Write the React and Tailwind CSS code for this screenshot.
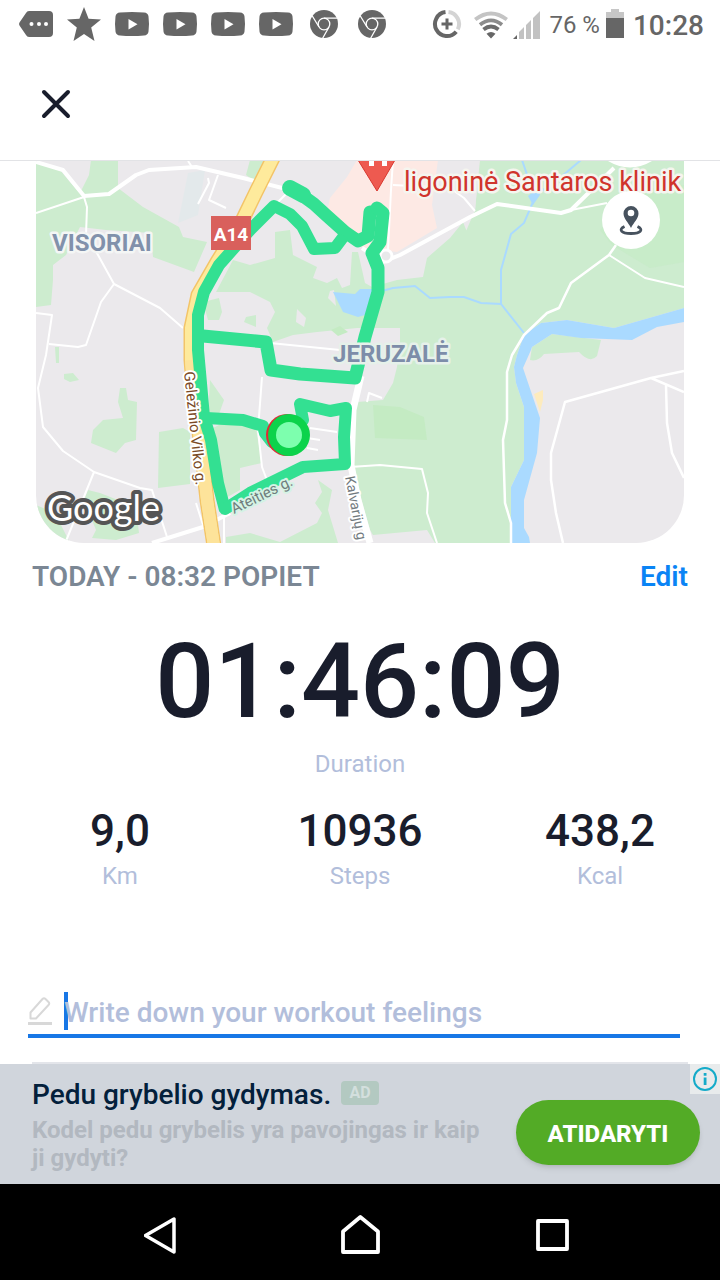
import React from "react";

function MessageIcon() {
  return (
    <svg viewBox="0 0 48 48" className="w-12 h-12">
      <path d="M17 11h20q4 0 4 4v18q0 4-4 4H17q-2 0-3-2L7.500 25.500q-1-1.500 0-3L14 13q1-2 3-2z" fill="#666" />
      <circle cx="19.500" cy="24" r="2" fill="#fff" />
      <circle cx="27" cy="24" r="2" fill="#fff" />
      <circle cx="34" cy="24" r="2" fill="#fff" />
    </svg>
  );
}

function StarIcon() {
  return (
    <svg viewBox="0 0 48 48" className="w-12 h-12">
      <path d="M24 7l4.600 11.800L41 19.400l-9.800 8.200L34.500 41 24 34l-10.500 7 3.300-13.400L7 19.400l12.400-.6z" fill="#666" />
    </svg>
  );
}

function VideoIcon() {
  return (
    <svg viewBox="0 0 48 48" className="w-12 h-12">
      <path d="M12 12.500q12-1 24 0 4 .3 4.500 4 1 7.500 0 15-.5 3.700-4.500 4-12 1-24 0-4-.3-4.500-4-1-7.500 0-15 .5-3.700 4.500-4z" fill="#666" />
      <path d="M20.500 19v10.500l9-5.200z" fill="#fff" />
    </svg>
  );
}

function ChromeIcon() {
  return (
    <svg viewBox="0 0 48 48" className="w-12 h-12">
      <circle cx="24" cy="24" r="14" fill="#666" />
      <g fill="none" stroke="#fff" strokeWidth="1.300">
        <circle cx="24" cy="24" r="5.800" />
        <path d="M24 18.200H37.500M19 27L12 15.500M29 27L22.500 38.500" />
      </g>
    </svg>
  );
}

function DataSaverIcon() {
  return (
    <svg viewBox="0 0 32 32" className="w-8 h-8">
      <g fill="none" strokeWidth="4">
        <path d="M17.500 4.100A12 12 0 0 1 26.800 21.300" stroke="#d4d4d4" />
        <path d="M14.500 4.100A12 12 0 1 0 25.200 23.700" stroke="#666" />
      </g>
      <path d="M16 10.500v11M10.500 16h11" stroke="#666" strokeWidth="3" />
    </svg>
  );
}

function WifiIcon() {
  return (
    <svg viewBox="0 0 36 32" className="w-9 h-8">
      <g fill="none" strokeWidth="3.800">
        <path d="M2.200 11.600Q18-.5 33.800 11.600" stroke="#c4c4c4" />
        <path d="M7 16.800Q18 8 29 16.800" stroke="#8c8c8c" />
        <path d="M10.500 21.500Q18 15.500 25.500 21.500" stroke="#6c6c6c" />
      </g>
      <path d="M13.500 25.700q4.500-3.500 9 0L18 30.500z" fill="#666" />
    </svg>
  );
}

function SignalIcon() {
  return (
    <svg viewBox="0 0 28 32" className="w-7 h-8">
      <path d="M0 31l4-4v4z" fill="#666" />
      <path d="M6 31v-7l5-5v12zM13 31V17l5-5v19zM20 31V10l7-7v28z" fill="#c2c2c2" />
    </svg>
  );
}

function BatteryIcon() {
  return (
    <svg viewBox="0 0 20 32" className="w-5 h-8">
      <path d="M1 4h5V1h8v3h5v7H1z" fill="#c6c6c6" />
      <path d="M1 10h18v20H1z" fill="#666" />
    </svg>
  );
}

function StatusBar() {
  return (
    <div className="flex h-12 items-center justify-between pl-3 pr-4 text-[#666]">
      <div className="flex">
        <MessageIcon />
        <StarIcon />
        <VideoIcon />
        <VideoIcon />
        <VideoIcon />
        <VideoIcon />
        <ChromeIcon />
        <ChromeIcon />
      </div>
      <div className="flex items-center">
        <DataSaverIcon />
        <div className="ml-2.5 flex"><WifiIcon /></div>
        <div className="ml-1 flex"><SignalIcon /></div>
        <span className="ml-2 pt-0.5 text-2xl">76 %</span>
        <div className="ml-[5px] flex"><BatteryIcon /></div>
        <span className="ml-2 pt-1 text-[28px] font-medium">10:28</span>
      </div>
    </div>
  );
}

function RouteMap() {
  return (
    <svg
      viewBox="36 161 648 382"
      preserveAspectRatio="xMidYMid slice"
      className="block w-full"
      role="img"
      aria-label="Workout route"
    >
      <rect x="36" y="161" width="648" height="382" fill="#ebe9ec" />

      {/* parks and forests */}
      <g fill="#cdeccf">
        <path d="M36 163L60 170 70 182 80 193 89 175 91 160H118V188L143 207 179 227 183 237 207 242 194 272 153 257 151 233 106 230 80 227 66 255 53 265V280L51 305 36 307z" />
        <path d="M246 175L250 160H268L256 182z" />
        <path d="M233 260L250 265 275 258V232L290 230 293 255 317 267 313 278 327 283 337 278 342 288 350 285 352 252H358L365 283 372 287 397 280 423 277 427 258 450 238 463 222 467 232 464 236 475 210 480 160H684V308L614 328 567 320 541 323 524 335 517 355 514 367 516 383 524 407V460L511 487V543H435L427 530 373 535 370 530 352 467V433L357 402 383 400 393 383 397 367 400 342V328L357 328 317 332 293 335 273 342 267 328 275 312 270 302 250 292 216 292z" />
        <path d="M532 347L552 334 601 340 597 356Q590 364 579 352L544 354Q538 362 530 360z" />
        <path d="M120 388H126L128 400 137 402 136 440 125 443 116 453 91 443 93 430 103 420 123 418 118 402z" />
        <path d="M159 432L183 428 190 432V484L158 488z" />
        <path d="M64 374L73 373 79 380 70 382 64 379z" />
        <path d="M55 347H59V363H56z" />
        <path d="M36 505L55 513 70 543H36z" />
        <path d="M88 490L100 493 136 507 139 533 116 540 92 538 96 530 84 500z" />
        <path d="M210 380L224 400 218 417H208z" />
        <path d="M209 430L223 423 256 428 262 463 240 468V490L222 500z" />
        <path d="M226 537L250 533 280 542 317 523 322 513 315 503 322 492 318 480 332 490 328 510 338 543H226z" />
        <path d="M203 302L219 298 222 312 219 320 208 320z" />
        <path d="M246 317L256 315V327L244 322z" />
      </g>
      <g fill="#c4ebc3">
        <path d="M373 405L400 407 424 417 427 440 375 438z" />
        <path d="M600 230L640 190 684 185V262L650 268 612 245z" opacity=".5" />
        <path d="M331 330L340 326 348 332 338 336z" />
      </g>
      <g fill="#ebe9ec">
        <path d="M330 291L334 290 336 306 328 298z" />
        <path d="M297 309L306 318 304 327 296 322z" />
        <path d="M438 160H479L475 211 464 220 440 232 430 205z" />
      </g>
      <path d="M188 173L205 170 198 215 178 223z" fill="#e3e9eb" />
      <path d="M357 160L347 177 330 198 327 212 363 248 397 252 437 228 432 205 438 160z" fill="#fde9e4" />

      {/* water */}
      <path d="M684 308L614 328 567 320 541 323 524 335 517 355 514 367 516 383 524 407V460L511 487V543H530L529 537 524 528V500L537 453 540 418 523 368 531 350 532 347 552 334 581 338 632 340 657 327 684 322z" fill="#aadaff" />
      <path d="M333 292L355 294 360 289H378L372 313 358 317 343 312z" fill="#aadaff" />
      <path d="M528 196L538 188 540 195 533 205z" fill="#aadaff" />
      <g fill="none" stroke="#aadaff" strokeWidth="2">
        <path d="M378 292L393 288 415 286 430 298 450 297 464 297 481 303 501 304 524 333" />
        <path d="M581 160L561 177 536 195 524 223 511 234 501 270V304M522 160L534 195" />
      </g>
      <path d="M534 394L543 390V400L540 412z" fill="#fdebbd" />

      {/* minor streets */}
      <g fill="none" stroke="#fff" strokeWidth="2" strokeLinejoin="round">
        <path d="M36 213L84 197 87 207 86 235 98 255 114 284 160 308 183 328M114 284L101 302 86 345 78 347 49 344" />
        <path d="M36 313L52 315 46 355 38 388 43 427 63 451 94 472 140 488 152 490 167 537M94 472L66 541" />
        <path d="M208 178L209 183 198 204M218 175L209 200 226 208M188 161L192 167M196 503L203 525M224 515V543" />
        <path d="M262 377L258 430 262 467 268 483M310 428L337 432M307 438L320 440M307 448L318 450" />
        <path d="M270 343L340 350M278 202L290 190M393 160L391 190 388 250M393 185L450 188 464 198 475 211" />
        <path d="M571 210L607 203M609 255L645 278 684 287" />
        <path d="M350 467L380 465 422 469 428 493 427 513 437 543M367 402L369 393 382 398" />
      </g>
      <g fill="none" stroke="#fff" strokeWidth="2.500" strokeLinejoin="round">
        <path d="M616 245L609 255 571 283 559 308 547 313 524 335 512 355 507 372V420L503 440 505 503 511 523V543" />
        <path d="M684 371L651 378 565 402 551 453V480L556 513 563 543M651 378L684 392M666 385L667 423 672 453 684 478" />
      </g>
      <g fill="none" stroke="#fff" strokeWidth="4" strokeLinejoin="round">
        <path d="M36 162L63 170 84 196 109 194 136 175 149 170 196 167 243 178 290 190" />
        <path d="M152 543L203 527 230 513" />
        <path d="M362 248L383 262 400 255 470 217 497 204 561 213 571 210 614 168" />
        <path d="M361 376L353 410 351 465 358 500 370 543" strokeWidth="7" />
      </g>
      <circle cx="386" cy="256" r="6" fill="#e8e9ea" stroke="#fff" strokeWidth="3" />
      <path d="M608 161H652Q630 174 608 161z" fill="#fff" />

      {/* highway */}
      <g fill="none" strokeLinejoin="round">
        <path d="M274 156L256 192 240 225 217 262 198 295 191 328 191 360 193 385 203 463 207 500 214 546" stroke="#f3c468" strokeWidth="15" />
        <path d="M274 156L256 192 240 225 217 262 198 295 191 328 191 360 193 385 203 463 207 500 214 546" stroke="#feea9c" strokeWidth="12" />
        <path d="M191 360L193 385 203 463 207 500 214 546" stroke="#fde39a" strokeWidth="12" />
      </g>

      {/* recorded route */}
      <g fill="none" stroke="#33e092" strokeWidth="12" strokeLinecap="round" strokeLinejoin="round">
        <path d="M290 188L303 195" strokeWidth="16" />
        <path d="M303 196L314 204 326 215 345 232 358 241 368 236 370 212" strokeWidth="13" />
        <path d="M377 208L383 213 380 242 372 253 378 268V292L365 337 355 378 300 374 271 370 266 342 203 336" strokeWidth="13" />
        <path d="M344 236L335 248 314 249 302 226 290 214 274 206 250 230 219 265 204 292 198 315V350L200 372 204 417 211 440 218 483 225 510" strokeLinecap="butt" />
        <path d="M225 509L250 493 303 467 345 464 344 437 346 408 330 411 300 404 303 420" />
        <path d="M206 418L243 420 263 426 265 433 272 442" />
      </g>
      <circle cx="287" cy="435" r="21" fill="#e12a34" />
      <circle cx="289" cy="435" r="21" fill="#0cd34b" />
      <circle cx="289" cy="435" r="13" fill="#7dffae" />

      {/* hospital pin */}
      <path d="M358 160H395L377 191z" fill="#ee5a50" stroke="#d7382f" strokeWidth="1" />
      <path d="M369 160h5v6h-5zM382 160h5v6h-5z" fill="#fff" />

      {/* labels */}
      <rect x="211" y="216" width="40" height="34" fill="#d9605c" />
      <g fontFamily="Roboto, sans-serif" paintOrder="stroke" strokeLinejoin="round" strokeWidth="5">
        <text x="231" y="241" fontSize="19" fontWeight="700" fill="#fff" textAnchor="middle">A14</text>
        <text x="52" y="251" fontSize="24" fontWeight="700" fill="#8191ab" stroke="#f4f6f5">VISORIAI</text>
        <text x="333" y="362" fontSize="24" fontWeight="700" fill="#7d8da9" stroke="#e6f1ea">JERUZALĖ</text>
        <text x="404" y="191" fontSize="27" fill="#d0342c" stroke="#f5f5ef">ligoninė Santaros klinik</text>
        <text transform="translate(184 372) rotate(84)" fontSize="15" fill="#7b4a26" stroke="#fff" strokeWidth="4">Geležinio Vilko g.</text>
        <text transform="translate(234 514) rotate(-26)" fontSize="15" fill="#6f7d7d" stroke="#d5f3e4" strokeWidth="4">Ateities g.</text>
        <text transform="translate(345 477) rotate(79)" fontSize="14" fill="#727a7e" stroke="#fff" strokeWidth="4">Kalvarijų g</text>
      </g>
      <text x="47" y="521" fontFamily="Lato, sans-serif" fontSize="36" fontWeight="400" fill="#fff" stroke="#555" strokeWidth="8" strokeLinejoin="round" paintOrder="stroke">Google</text>
    </svg>
  );
}

function LocateIcon() {
  return (
    <svg viewBox="0 0 30 30" className="h-[30px] w-[30px]">
      <path d="M15 1a7.500 7.500 0 0 0-7.500 7.500C7.500 13.500 12 17 15 23c3-6 7.500-9.500 7.500-14.500A7.500 7.500 0 0 0 15 1z" fill="#47525e" />
      <circle cx="15" cy="8" r="3.300" fill="#fff" />
      <path d="M8.500 21.500C2 24.500 5 28.500 15 28.500s13-4 6.500-7" fill="none" stroke="#47525e" strokeWidth="2.800" />
    </svg>
  );
}

function Stat({ value, label }) {
  return (
    <div className="flex flex-1 flex-col items-center">
      <span className="text-[44px] leading-[52px] font-medium text-[#191d2c]">{value}</span>
      <span className="mt-[3px] text-2xl leading-8 text-[#b2bedb]">{label}</span>
    </div>
  );
}

export default function App() {
  return (
    <div className="flex min-h-screen flex-col bg-white font-['Roboto',sans-serif]">
      <StatusBar />
      <header className="flex h-[113px] items-center border-b border-[#e2e3e6] px-8">
        <button aria-label="Close" className="flex h-12 w-12 items-center justify-center">
          <svg viewBox="0 0 32 32" className="h-8 w-8">
            <path d="M4 4l24 24M28 4L4 28" stroke="#191d2c" strokeWidth="4" strokeLinecap="round" />
          </svg>
        </button>
      </header>

      <main className="flex flex-1 flex-col">
        <section className="relative mx-9 overflow-hidden rounded-b-[48px]">
          <RouteMap />
          <button
            aria-label="Center on location"
            className="absolute top-[30px] right-6 flex h-[58px] w-[58px] items-center justify-center rounded-full bg-white"
          >
            <LocateIcon />
          </button>
        </section>

        <div className="mt-4 flex items-center justify-between px-8 text-[28px] leading-9 font-semibold">
          <h1 className="text-[#7b8794]">TODAY - 08:32 POPIET</h1>
          <button className="text-[#0a84f5]">Edit</button>
        </div>

        <div className="mt-[27px] flex flex-col items-center">
          <span className="text-[104px] leading-[120px] font-medium text-[#191d2c]">01:46:09</span>
          <span className="mt-1.5 text-2xl leading-8 text-[#b2bedb]">Duration</span>
        </div>
        <div className="mt-[25px] flex">
          <Stat value="9,0" label="Km" />
          <Stat value="10936" label="Steps" />
          <Stat value="438,2" label="Kcal" />
        </div>

        <div className="mt-auto pl-7 pr-8">
          <div className="mr-2 flex h-[46px] items-start border-b-4 border-[#1877e6]">
            <svg viewBox="0 0 24 30" className="mt-1 h-[30px] w-6">
              <path d="M2.500 22.500v-6L14.500 3q1.500-1.500 3 0l3 3q1.500 1.500 0 3L8 22.500z" fill="none" stroke="#d8d8d8" strokeWidth="2" strokeLinejoin="round" />
              <path d="M0 27.500h24" stroke="#d8d8d8" strokeWidth="3" />
            </svg>
            <div className="relative ml-3 flex-1">
              <span className="absolute top-0 left-0 h-[38px] w-1 bg-[#1877e6]" />
              <input
                aria-label="Workout feelings"
                placeholder="Write down your workout feelings"
                className="relative block h-[42px] w-full bg-transparent text-[28px] font-medium text-[#191d2c] outline-none placeholder:text-[#b2bedb]"
              />
            </div>
          </div>
          <hr className="mt-6 ml-1 border-0 border-t-2 border-[#e3e5ea]" />
        </div>
      </main>

      <aside className="relative flex h-[120px] items-start justify-between gap-8 bg-[#d0d5dc] pt-3 pr-5 pl-8">
        <div className="min-w-0 pt-px">
          <div className="flex items-center gap-2.5">
            <h2 className="text-[28px] leading-9 font-medium text-[#03203b]">Pedu grybelio gydymas.</h2>
            <span className="mb-1 flex h-6 w-[38px] items-center justify-center rounded-sm bg-[#b3c9c1] text-base font-bold text-[#d3dfdd]">AD</span>
          </div>
          <p className="mt-[3px] text-2xl leading-7 font-bold text-[#b2b8c0]">Kodel pedu grybelis yra pavojingas ir kaip ji gydyti?</p>
        </div>
        <button className="mt-6 h-[65px] w-46 shrink-0 rounded-full bg-[#53ab26] pt-0.5 text-2xl font-extrabold text-white shadow-md">
          ATIDARYTI
        </button>
        <button aria-label="Ad information" className="absolute top-0 right-0 flex h-[30px] w-[30px] items-center justify-center bg-[#e8ebec]">
          <svg viewBox="0 0 26 26" className="h-[26px] w-[26px]">
            <circle cx="13" cy="13" r="11" fill="none" stroke="#14abc9" strokeWidth="2" />
            <path d="M11.700 7h2.800v2.800h-2.800zM11.700 11.500h2.800V19h-2.800z" fill="#14abc9" />
          </svg>
        </button>
      </aside>

      <nav className="flex h-24 items-center justify-center gap-36 bg-black pt-2">
        <button aria-label="Back" className="flex h-12 w-12 items-center justify-center">
          <svg viewBox="8 0 48 48" className="h-12 w-12" fill="none" stroke="#fff" strokeWidth="3.500" strokeLinejoin="round">
            <path d="M9.500 23.500L38 7V40z" />
          </svg>
        </button>
        <button aria-label="Home" className="flex h-12 w-12 items-center justify-center">
          <svg viewBox="0 0 48 48" className="h-12 w-12" fill="none" stroke="#fff" strokeWidth="3.800" strokeLinejoin="round">
            <path d="M7 40V19.500L24.300 5 42 19.500V40z" />
          </svg>
        </button>
        <button aria-label="Recent apps" className="flex h-12 w-12 items-center justify-center">
          <svg viewBox="0 0 48 48" className="h-12 w-12" fill="none" stroke="#fff" strokeWidth="3.800" strokeLinejoin="round">
            <path d="M10 9h29v28H10z" />
          </svg>
        </button>
      </nav>
    </div>
  );
}
